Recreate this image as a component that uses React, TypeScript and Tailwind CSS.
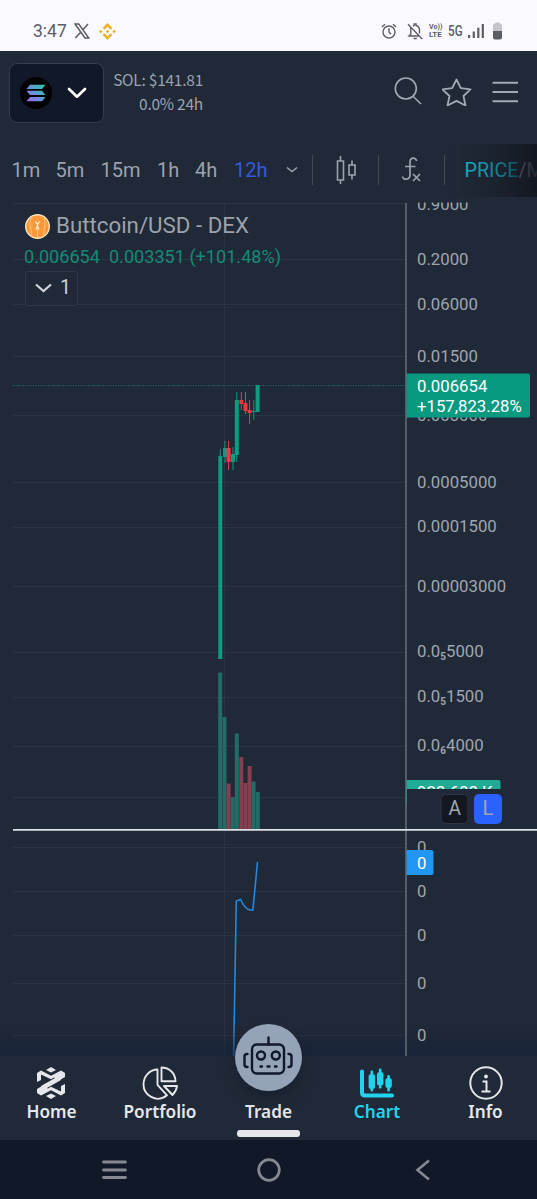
import React from "react";

const ticks: [number, string, string, string][] = [
  [204, "0.9000", "", ""],
  [259.5, "0.2000", "", ""],
  [304.5, "0.06000", "", ""],
  [356, "0.01500", "", ""],
  [415.5, "0.003000", "", ""],
  [482, "0.0005000", "", ""],
  [526.5, "0.0001500", "", ""],
  [586.5, "0.00003000", "", ""],
  [651.5, "0.0", "5", "5000"],
  [696, "0.0", "5", "1500"],
  [745, "0.0", "6", "4000"],
  [847, "0", "", ""],
  [891, "0", "", ""],
  [935, "0", "", ""],
  [983, "0", "", ""],
  [1035, "0", "", ""],
];

const gridLines = [203.5, 259.5, 304.5, 356, 415.5, 482, 527, 586.5, 652.5, 697.5, 746, 797.5, 847.5, 891.5, 935.5, 983.5, 1035.5];

const UP = "#0d9c80";
const DOWN = "#f23645";

// x, wick top, wick bottom, body top, body bottom, rising
const candles: [number, number, number, number, number, boolean][] = [
  [220.3, 449, 659, 456, 659, true],
  [225, 441, 463, 448, 457, true],
  [228.6, 441, 470, 448, 462, false],
  [233, 447, 470, 454, 462, true],
  [236.8, 392, 462, 400, 455, true],
  [241.3, 392, 410, 400, 404, false],
  [245.5, 392, 414, 403, 411, false],
  [249.6, 400, 424, 410, 413, false],
  [253.8, 400, 420, 411, 412, true],
  [257.6, 385, 412, 385, 412, true],
];

const volumes: [number, number, boolean][] = [
  [220.2, 672.5, true],
  [224.5, 717, true],
  [228.6, 783.5, false],
  [232.7, 797, true],
  [236.8, 733.5, true],
  [241.3, 757, false],
  [245.5, 783, false],
  [249.6, 766, false],
  [253.6, 781.5, true],
  [257.8, 792, true],
];

function StatusBar() {
  return (
    <div className="flex h-[51px] shrink-0 items-end justify-between bg-[#f9f9ff] pr-[35px] pb-[9px] pl-[33px] text-[#5d5d64]">
      <div className="flex h-[22px] items-center">
        <span className="w-[41px] font-[Roboto] text-[17.5px] leading-[22px]">3:47</span>
        <svg width="16" height="16" viewBox="0 0 16 16" fill="none" stroke="currentColor" strokeWidth="1.5">
          <path d="M1 1h3.8l10 14H11zM14 1 8.6 7M6.9 9 1.3 15" />
        </svg>
        <svg className="ml-[9px]" width="17" height="17" viewBox="0 0 17 17" fill="#e5b32c">
          <path d="m8.5 0 4.9 4.9-1.9 1.9-3-3-3 3-1.9-1.9zM8.5 17l4.9-4.9-1.9-1.9-3 3-3-3-1.9 1.9zM8.5 6.800l1.800 1.700-1.800 1.800-1.800-1.800zM1.800 6.800l1.800 1.700-1.800 1.800L0 8.500zM15.200 6.800 17 8.500l-1.800 1.800-1.800-1.800z" />
        </svg>
      </div>
      <div className="flex h-[22px] items-center">
        <svg width="16" height="16" viewBox="0 0 16 16" fill="none" stroke="currentColor" strokeWidth="1.4">
          <circle cx="8" cy="9" r="6" />
          <path d="M8 5.3V9l2 2.3M1 3.900 4 1.200M15 3.900l-3-2.700" />
        </svg>
        <svg className="ml-[10px]" width="16" height="17" viewBox="0 0 16 17" fill="none" stroke="currentColor" strokeWidth="1.4">
          <path d="M1 1.200 15.200 16M3.800 4.400v6.800L2 13h9.800M6 3.200l1.200-.7V1h1.900v1.500c2.200.6 3.400 2.300 3.400 4.700v3.200M6.600 15.500h3.200" />
        </svg>
        <div className="ml-[6px] flex w-[14px] flex-col font-[Roboto] text-[8px] leading-[8px] font-bold whitespace-nowrap">
          <span className="origin-left scale-x-[.88]">Vo))</span>
          <span className="origin-left scale-x-[.98]">LTE</span>
        </div>
        <span className="ml-[5px] w-[16px] origin-left scale-x-[.78] font-[Roboto] text-[15px] font-medium">5G</span>
        <svg className="ml-[4px]" width="17" height="16" viewBox="0 0 17 16" fill="currentColor">
          <path d="M0 12h2.200v3H0zM4.700 8.500h2.200V15H4.700zM9.200 4.800h2.200V15H9.200zM13.700 1h2.200v14h-2.200z" />
        </svg>
        <svg className="ml-[8px]" width="9" height="18" viewBox="0 0 9 18">
          <path d="M2 1.500Q2 .5 3 .5h3q1 0 1 1 2 .2 2 2V9H0V3.500Q0 1.700 2 1.500Z" fill="#c4c4ca" />
          <path d="M0 9h9v6.500q0 2-2 2H2q-2 0-2-2Z" fill="#5d5d64" />
        </svg>
      </div>
    </div>
  );
}

function SolanaMark() {
  return (
    <svg width="32" height="32" viewBox="0 0 32 32">
      <defs>
        <linearGradient id="sol" x1="7" y1="25" x2="25" y2="7" gradientUnits="userSpaceOnUse">
          <stop stopColor="#a463ef" />
          <stop offset=".5" stopColor="#6199d6" />
          <stop offset="1" stopColor="#27cda2" />
        </linearGradient>
      </defs>
      <circle cx="16" cy="16" r="16" fill="#020204" />
      <path d="M10 7.800h15.500l-3.500 4.200H6.500zM6.500 13.800H22l3.500 4.200H10zM10 20h15.500L22 24.200H6.500z" fill="url(#sol)" />
    </svg>
  );
}

function Header() {
  return (
    <header className="flex h-[93px] shrink-0 items-start pt-[12px] pr-[18px] pl-[9px]">
      <button className="flex h-[60px] w-[95px] shrink-0 items-center rounded-[8px] border border-[#333d4d] bg-[#111827] pl-[10px]">
        <SolanaMark />
        <svg className="ml-[15px]" width="20" height="12" viewBox="0 0 20 12" fill="none" stroke="#fff" strokeWidth="2.700" strokeLinecap="round" strokeLinejoin="round">
          <path d="m2 2 8 7.700L18 2" />
        </svg>
      </button>
      <div className="flex w-[99px] flex-col items-end pt-[4px] font-['Noto_Sans_CJK_SC','Noto_Sans',sans-serif] text-[15.500px] leading-[24px] tracking-[-0.25px] whitespace-nowrap text-[#9ca3af]">
        <div>SOL: $141.81</div>
        <div>0.0% 24h</div>
      </div>
      <div className="mt-[13px] ml-auto flex items-start text-[#a3a9b4]">
        <svg width="28" height="30" viewBox="0 0 28 30" fill="none" stroke="currentColor" strokeWidth="1.600">
          <circle cx="11.800" cy="12.500" r="10.500" />
          <path d="m19.300 20.500 7.700 7.500" />
        </svg>
        <svg className="ml-[20px]" width="30" height="30" viewBox="0 0 30 30" fill="none" stroke="currentColor" strokeWidth="1.800" strokeLinejoin="round">
          <path d="m14.500 3.500 4.300 8.700 9.700 1.200-7 6.600 2 9.500-9-4.600-9 4.600 2-9.500-7-6.600 9.700-1.200z" />
        </svg>
        <svg className="ml-[20px]" width="27" height="30" viewBox="0 0 27 30" fill="none" stroke="currentColor" strokeWidth="1.900">
          <path d="M.500 6.700h25.500M.500 16h25.500M.500 25.200h25.500" />
        </svg>
      </div>
    </header>
  );
}

function Toolbar() {
  return (
    <div className="relative flex h-[53px] w-[537px] shrink-0 items-center overflow-hidden pb-px pl-[11.500px] font-[Roboto] text-[20px] whitespace-nowrap text-[#9ca3af]">
      <span className="w-[44px] shrink-0">1m</span>
      <span className="w-[45px] shrink-0">5m</span>
      <span className="w-[56.500px] shrink-0">15m</span>
      <span className="w-[38px] shrink-0">1h</span>
      <span className="w-[39px] shrink-0">4h</span>
      <span className="w-[52px] shrink-0 text-[#3659dc]">12h</span>
      <svg className="shrink-0" width="12" height="8" viewBox="0 0 12 8" fill="none" stroke="currentColor" strokeWidth="1.500"><path d="m1 1.500 5 4 5-4" /></svg>
      <i className="ml-[14px] h-[30px] w-px shrink-0 bg-[#414956]" />
      <svg className="ml-[23px] shrink-0" width="21" height="28" viewBox="0 0 21 28" fill="none" stroke="currentColor" strokeWidth="1.600">
        <path d="M1.500 5h6v19h-6zM4.500 0v5M4.500 24v4M13 9h6v10h-6zM16 4.500V9M16 19v4.500" />
      </svg>
      <i className="ml-[21px] h-[30px] w-px shrink-0 bg-[#414956]" />
      <svg className="ml-[22px] shrink-0" width="21" height="28" viewBox="0 0 21 28" fill="none" stroke="currentColor" strokeWidth="1.700">
        <path d="M15.500 5C15.500 1.200 9 .800 9 6v13c0 5-7 5.500-7.500 1.500M4 10.500h10.500M12 18l7 7M19 18l-7 7" />
      </svg>
      <i className="ml-[22px] h-[30px] w-px shrink-0 bg-[#414956]" />
      <div className="ml-[19.500px] pt-px text-[19.700px] text-[#18bdd5]">PRICE<span className="text-[#b4bac5]">/M</span></div>
      <div className="absolute top-0 right-0 h-full w-[84px] bg-linear-to-r from-transparent via-[#141822]/35 to-[#12151f]/90" />
    </div>
  );
}

function PriceChart() {
  return (
    <svg className="block" width="537" height="859" viewBox="0 197 537 859" fontFamily="Roboto" fontSize="16.750" fill="#a0a5af">
      <defs>
        <clipPath id="axisclip"><path d="M406 202.500h131V829H406zM406 830h131v226H406z" /></clipPath>
        <clipPath id="volclip"><path d="M406 780h100v9H406z" /></clipPath>
        <linearGradient id="fade" x1="0" y1="1025" x2="0" y2="1056" gradientUnits="userSpaceOnUse">
          <stop stopColor="#16203b" stopOpacity="0" />
          <stop offset="1" stopColor="#16203b" stopOpacity=".6" />
        </linearGradient>
      </defs>
      <g stroke="#2b3442" strokeWidth="1">
        {gridLines.map((y) => <path key={y} d={`M13 ${Math.floor(y) + 0.5}H406`} />)}
        <path d="M224.500 203V1056" />
      </g>
      <path d="M13 385.500H406" stroke="#217369" strokeDasharray="1 1.500" />
      {candles.map(([x, wt, wb, bt, bb, up]) => (
        <g key={x} fill={up ? UP : DOWN}>
          <rect x={x - 0.5} y={wt} width="1" height={wb - wt} />
          <rect x={x - 2} y={bt} width="4" height={bb - bt} />
        </g>
      ))}
      {volumes.map(([x, y, up]) => (
        <rect key={x} x={x - 2} y={y} width="4" height={829 - y} fill={up ? "#236b66" : "#873f50"} />
      ))}
      <path d="M233.600 1056 236.300 901l4.300-1.500q4 9 9 10.500h3.300l4.600-48" fill="none" stroke="#2489dc" strokeWidth="1.600" />
      <path d="M0 1025h537v31H0z" fill="url(#fade)" />
      <path d="M406 203V1056" stroke="#747a85" strokeWidth="1.300" />
      <g clipPath="url(#axisclip)">
        {ticks.map(([y, a, sub, b]) => (
          <text key={y} x="417" y={y + 5.8}>
            {a}
            {sub && <tspan fontSize="10" fontWeight="700" dy="3">{sub}</tspan>}
            {b && <tspan dy="-3">{b}</tspan>}
          </text>
        ))}
      </g>
      <path d="M406.500 373.500H528q2 0 2 2V415.500q0 2-2 2H406.500z" fill="#089981" />
      <text x="417" y="391.800" fill="#fff">0.006654</text>
      <text x="417" y="411.500" fill="#fff">+157,823.28%</text>
      <path d="M406.500 780h92q2 0 2 2v7H407v16h-.5z" fill="#22ab94" />
      <text x="417" y="798" fill="#fff" clipPath="url(#volclip)">928.688 K</text>
      <rect x="441" y="794.500" width="27" height="29" rx="5" fill="#131722" stroke="#2e3440" />
      <rect x="474" y="794" width="28" height="30" rx="5" fill="#2962ff" />
      <text x="448.500" y="814.500" fontSize="20" textLength="12.500" lengthAdjust="spacingAndGlyphs">A</text>
      <text x="482.500" y="814.500" fontSize="20">L</text>
      <path d="M13 829.800H537" stroke="#dfe1e8" strokeWidth="1.800" />
      <path d="M406.500 850h25q2 0 2 2v21q0 2-2 2h-25z" fill="#2196f3" />
      <text x="417" y="868.500" fill="#fff">0</text>
    </svg>
  );
}

function Legend() {
  return (
    <div className="absolute top-[15px] left-[24px] font-[Roboto]">
      <div className="flex h-[27px] items-center text-[22.300px] text-[#9da2ac]">
        <svg className="mr-[6px]" width="26" height="26" viewBox="0 0 26 26" fill="none">
          <circle cx="13.500" cy="13.500" r="11.800" fill="#fb993a" stroke="#fbe3bd" strokeWidth="1.400" />
          <path d="M7 5q-2 6-.5 9t.5 8M20 5q2 6 .5 9t-.5 8M13.500 16v8" stroke="#fcc57e" />
          <path d="m11.500 8.500 2 3 2-3M13.500 11v4M12 16.500l1.500-3 1.500 3" stroke="#fff3d8" strokeWidth="1.300" />
        </svg>
        Buttcoin/USD - DEX
      </div>
      <div className="mt-[6px] flex h-[24px] items-center gap-[9px] text-[18.100px] whitespace-nowrap text-[#168a78]">
        <span>0.006654</span><span>0.003351 (+101.48%)</span>
      </div>
      <div className="mt-[2px] ml-px flex h-[35px] w-[53px] items-center gap-[8px] rounded-[3px] border border-[#303948] bg-[#1f2937] pb-px pl-[9px] text-[19.500px] text-[#d1d4dc]">
        <svg width="17" height="10" viewBox="0 0 17 10" fill="none" stroke="currentColor" strokeWidth="2.200"><path d="m1 1.500 7.500 6.500L16 1.500" /></svg>
        1
      </div>
    </div>
  );
}

function HomeIcon() {
  return (
    <svg className="-ml-[2px]" width="30" height="34" viewBox="0 0 30 34" fill="currentColor">
      <path d="m10 4 5-3 5 3-5 2.500zM10 30l5-2.500 5 2.500-5 3zM1 7l4-2.500 10 5.200L25 4.500 29 7v4L5 25v-5L19 12l-1-.5-3 1.700L5 8.500V14L1 16zM29 27l-4 2.500-10-5.200L5 29.500 1 27v-4L25 9v5L11 22l1 .5 3-1.700 10 4.700V20l4-2z" />
    </svg>
  );
}

function PortfolioIcon() {
  return (
    <svg width="36" height="34" viewBox="0 0 36 34" fill="none" stroke="currentColor" strokeWidth="1.900" strokeLinejoin="round">
      <path d="M19.500 1.500v13.800H33.500C33.500 7.500 27.500 1.500 19.500 1.500ZM15.500 3.500v15.300l9.500 10.500C14 38 1.500 28.500 1.500 18.500 1.500 10 8 3.500 15.500 3.500ZM22 20h13q-.5 5-4.500 9Z" />
    </svg>
  );
}

function ChartIcon() {
  return (
    <svg width="36" height="34" viewBox="0 0 36 34" fill="currentColor">
      <path d="M3 5.500V26.500q0 3 3 3h27" fill="none" stroke="currentColor" strokeWidth="4" strokeLinecap="round" />
      <rect x="9.600" y="8" width="6.400" height="15" rx="2.500" />
      <rect x="11.500" y="4.500" width="2.600" height="21" rx="1" />
      <rect x="18" y="6" width="6.400" height="13.500" rx="2.500" />
      <rect x="19.900" y="2.500" width="2.600" height="20" rx="1" />
      <rect x="26.400" y="12" width="6.400" height="10" rx="2.500" />
      <rect x="28.300" y="9" width="2.600" height="16.500" rx="1" />
    </svg>
  );
}

function InfoIcon() {
  return (
    <svg width="34" height="34" viewBox="0 0 34 34" fill="none" stroke="currentColor">
      <circle cx="17" cy="17" r="15.700" strokeWidth="2" />
      <circle cx="17" cy="10.500" r="1.900" fill="currentColor" stroke="none" />
      <path d="M13.500 15.500h4V25M12.500 25.500h9" strokeWidth="2" />
    </svg>
  );
}

function RobotIcon() {
  return (
    <svg className="-mt-[3px] -ml-px" width="50" height="42" viewBox="0 0 50 42" fill="none" stroke="#0f172a" strokeWidth="2.400" strokeLinecap="round">
      <rect x="9" y="9.500" width="32" height="29" rx="5" />
      <path d="M25.500 2.500v7M4.500 19H4q-2.500 0-2.500 2.500v8q0 2.500 2.500 2.500h.5M45.500 19h.5q2.500 0 2.500 2.500v8q0 2.500-2.500 2.500h-.5M17.500 31.500H19M24.500 31.500h2M32 31.500h1.500" />
      <circle cx="18" cy="20.500" r="4" />
      <circle cx="32.800" cy="20.500" r="4" />
    </svg>
  );
}

function NavItem({ label, icon, active }: { label: string; icon: React.ReactNode; active?: boolean }) {
  return (
    <div className={active ? "flex w-[108.500px] shrink-0 flex-col items-center text-[#22d3ee]" : "flex w-[108.500px] shrink-0 flex-col items-center text-[#e5e7eb]"}>
      <div className="flex h-[34px] items-center">{icon}</div>
      <span className="text-[17.200px] leading-[23px] font-semibold">{label}</span>
    </div>
  );
}

function BottomNav() {
  return (
    <nav className="relative flex h-[84px] w-[537px] shrink-0 justify-center bg-[#1f2937] pt-[10px] font-['Noto_Sans']">
      <NavItem label="Home" icon={<HomeIcon />} />
      <NavItem label="Portfolio" icon={<PortfolioIcon />} />
      <NavItem label="Trade" icon={null} />
      <NavItem label="Chart" icon={<ChartIcon />} active />
      <NavItem label="Info" icon={<InfoIcon />} />
      <div className="absolute -top-[32px] left-[235px] flex size-[67px] items-center justify-center rounded-full bg-[#94a3b8] shadow-lg shadow-[#111827]/40">
        <RobotIcon />
      </div>
      <div className="absolute top-[74px] left-[237px] h-[7px] w-[63px] rounded-[3px] bg-[#e5e7eb]" />
    </nav>
  );
}

function SystemBar() {
  return (
    <div className="flex h-[59px] shrink-0 items-center bg-[#111827] pl-[102px] text-[#858993]">
      <svg width="25" height="20" viewBox="0 0 25 20" stroke="currentColor" strokeWidth="2.800" strokeLinecap="round"><path d="M1.500 2h22M1.500 10h22M1.500 17.500h22" /></svg>
      <svg className="ml-[130px]" width="24" height="24" viewBox="0 0 24 24" fill="none" stroke="currentColor" strokeWidth="2.700"><circle cx="12" cy="12" r="10.300" /></svg>
      <svg className="ml-[134px]" width="16" height="22" viewBox="0 0 16 22" fill="none" stroke="currentColor" strokeWidth="2.600"><path d="M14 1.500 2.500 11 14 20.500" /></svg>
    </div>
  );
}

export default function App() {
  return (
    <div className="flex h-[1199px] w-[537px] flex-col overflow-hidden bg-[#1f2937]">
      <StatusBar />
      <Header />
      <Toolbar />
      <main className="relative h-[859px] shrink-0">
        <PriceChart />
        <Legend />
      </main>
      <BottomNav />
      <SystemBar />
    </div>
  );
}
